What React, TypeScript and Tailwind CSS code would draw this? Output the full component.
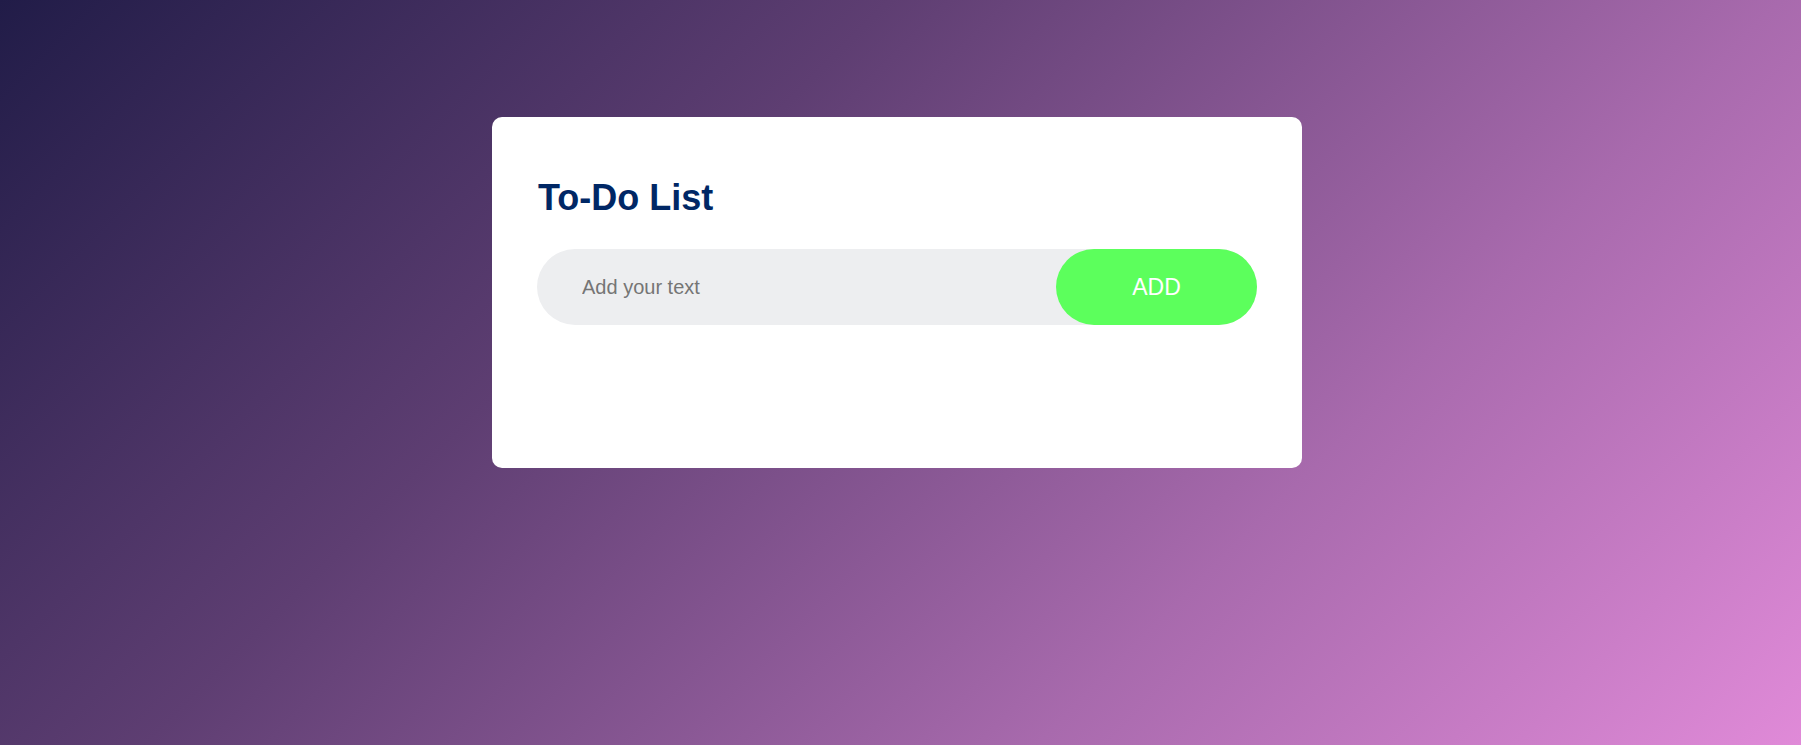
export default function App() {
  return (
    <div className="min-h-screen w-full overflow-hidden bg-[linear-gradient(135deg,#211c48_0%,#5e3e72_35%,#a86aad_70%,#e08ad8_100%)] pt-[117px] font-['Liberation_Sans',Arial,sans-serif]">
      <div className="ml-[492px] w-[810px] rounded-[10px] bg-white px-[45px] pt-[60px] pb-[143px]">
        {/* Title */}
        <h2 className="pl-px text-[36px] font-bold leading-[41px] text-[#002765]">To-Do List</h2>

        {/* Input row */}
        <div className="mt-[31px] flex h-[76px] items-center rounded-full bg-[#edeef0]">
          <input
            type="text"
            placeholder="Add your text"
            className="h-full flex-1 bg-transparent pl-[45px] text-[20px] text-[#333] outline-none placeholder:text-[#757575]"
          />
          <button className="h-full w-[201px] rounded-full bg-[#5cff5c] text-[23px] text-white">
            ADD
          </button>
        </div>
      </div>
    </div>
  );
}
